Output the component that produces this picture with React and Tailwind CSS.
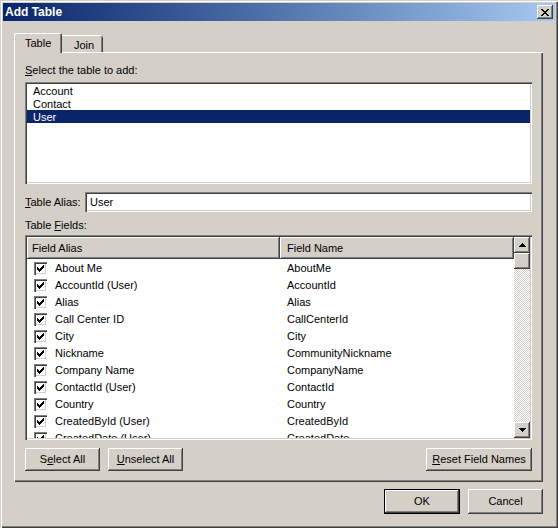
import React from 'react';

const raised =
  'shadow-[inset_-1px_-1px_0_#404040,inset_1px_1px_0_#fff,inset_-2px_-2px_0_#808080]';
const sunken =
  'shadow-[inset_1px_1px_0_#808080,inset_2px_2px_0_#404040,inset_-1px_-1px_0_#fff,inset_-2px_-2px_0_#d4d0c8]';

const fields = [
  ['About Me', 'AboutMe'],
  ['AccountId (User)', 'AccountId'],
  ['Alias', 'Alias'],
  ['Call Center ID', 'CallCenterId'],
  ['City', 'City'],
  ['Nickname', 'CommunityNickname'],
  ['Company Name', 'CompanyName'],
  ['ContactId (User)', 'ContactId'],
  ['Country', 'Country'],
  ['CreatedById (User)', 'CreatedById'],
  ['CreatedDate (User)', 'CreatedDate'],
];

const Check = () => (
  <div className={`w-[13px] h-[13px] bg-white shrink-0 flex items-center justify-center ${sunken}`}>
    <svg width="7" height="7" viewBox="0 0 7 7" shapeRendering="crispEdges">
      <path d="M0 2h1v3h-1zM1 3h1v3h-1zM2 4h1v3h-1zM3 3h1v3h-1zM4 2h1v3h-1zM5 1h1v3h-1zM6 0h1v3h-1z" fill="#000" />
    </svg>
  </div>
);

const Button = ({ children, className = '' }) => (
  <div className={`h-[23px] flex items-center justify-center bg-[#d4d0c8] ${raised} ${className}`}>
    {children}
  </div>
);

const Arrow = ({ down }) => (
  <div className={`h-[16px] w-[16px] bg-[#d4d0c8] flex items-center justify-center ${raised}`}>
    <svg width="7" height="4" viewBox="0 0 7 4" shapeRendering="crispEdges">
      <path d={down ? 'M0 0h7L3.5 4z' : 'M0 4h7L3.5 0z'} fill="#000" />
    </svg>
  </div>
);

export default function App() {
  return (
    <div className="w-[558px] h-[528px] bg-[#d4d0c8] p-[3px] flex flex-col text-[11px] leading-[13px] text-black font-['Liberation_Sans',Arial,sans-serif] shadow-[inset_1px_1px_0_#d4d0c8,inset_2px_2px_0_#fff,inset_-1px_-1px_0_#404040,inset_-2px_-2px_0_#808080]">
      {/* title bar */}
      <div className="h-[18px] flex items-center justify-between pl-[2px] pr-[2px] bg-gradient-to-r from-[#0a246a] to-[#a6caf0]">
        <span className="text-white font-bold text-[12px]">Add Table</span>
        <div className={`w-[16px] h-[14px] bg-[#d4d0c8] flex items-center justify-center ${raised}`}>
          <svg width="8" height="7" viewBox="0 0 8 7" shapeRendering="crispEdges">
            <path d="M0 0h2l2 2.5L6 0h2L5 3.5 8 7H6L4 4.5 2 7H0l3-3.5z" fill="#000" />
          </svg>
        </div>
      </div>

      <div className="flex-1 flex flex-col pl-[11px] pr-[12px] pt-[12px]">
        {/* tabs */}
        <div className="flex items-end h-[19px] relative z-10">
          <div className="w-[48px] h-[20px] -mb-[1px] bg-[#d4d0c8] rounded-t-[2px] flex items-start pt-[4px] pl-[11px] shadow-[inset_1px_1px_0_#fff,inset_-1px_0_0_#404040,inset_-2px_0_0_#808080]">
            Table
          </div>
          <div className="w-[41px] h-[17px] bg-[#d4d0c8] rounded-tr-[2px] flex items-start pt-[4px] pl-[12px] shadow-[inset_0_1px_0_#fff,inset_-1px_0_0_#404040,inset_-2px_0_0_#808080]">
            Join
          </div>
        </div>

        {/* panel */}
        <div className="w-[529px] h-[430px] flex flex-col px-[11px] shadow-[inset_1px_1px_0_#fff,inset_-1px_-1px_0_#404040,inset_-2px_-2px_0_#808080]">
          <div className="mt-[12px] h-[13px]">
            <u>S</u>elect the table to add:
          </div>
          <div className={`mt-[5px] h-[102px] bg-white p-[2px] ${sunken}`}>
            <div className="h-[13px] leading-[15px] pl-[6px]">Account</div>
            <div className="h-[13px] leading-[15px] pl-[6px]">Contact</div>
            <div className="h-[13px] leading-[15px] pl-[6px] bg-[#0a246a] text-white">User</div>
          </div>
          <div className="mt-[8px] h-[20px] flex items-center">
            <span className="w-[60px] pt-[1px]">
              <u>T</u>able Alias:
            </span>
            <div className={`flex-1 h-[20px] bg-white flex items-center pl-[5px] pt-[1px] ${sunken}`}>User</div>
          </div>
          <div className="mt-[6px] h-[13px] leading-[15px]">
            Table <u>F</u>ields:
          </div>
          <div className={`mt-[4px] h-[205px] bg-white p-[2px] flex ${sunken}`}>
            <div className="flex-1 flex flex-col overflow-hidden">
              <div className="h-[22px] shrink-0 flex">
                <div className={`w-[253px] bg-[#d4d0c8] flex items-center pl-[5px] pt-[1px] ${raised}`}>Field Alias</div>
                <div className={`flex-1 bg-[#d4d0c8] flex items-center pl-[7px] pt-[1px] ${raised}`}>Field Name</div>
              </div>
              {fields.map(([alias, name]) => (
                <div key={name} className="h-[17px] shrink-0 flex items-center pt-[2px]">
                  <div className="w-[253px] flex items-center pl-[7px] gap-[8px]">
                    <Check />
                    <span>{alias}</span>
                  </div>
                  <div className="flex-1 pl-[7px]">{name}</div>
                </div>
              ))}
            </div>
            <div className="w-[16px] flex flex-col">
              <Arrow />
              <div className={`h-[16px] bg-[#d4d0c8] ${raised}`} />
              <div className="flex-1 bg-[repeating-conic-gradient(#d4d0c8_0_25%,#fff_0_50%)] bg-[length:2px_2px]" />
              <Arrow down />
            </div>
          </div>
          <div className="mt-[8px] flex items-center">
            <Button className="w-[75px]">
              S<u>e</u>lect All
            </Button>
            <Button className="w-[75px] ml-[8px]">
              <u>U</u>nselect All
            </Button>
            <Button className="w-[106px] ml-auto">
              <u>R</u>eset Field Names
            </Button>
          </div>
        </div>

        {/* dialog buttons */}
        <div className="mt-[7px] flex justify-end gap-[8px]">
          <div className={`w-[76px] h-[25px] flex items-center justify-center border border-black bg-[#d4d0c8] ${raised}`}>
            OK
          </div>
          <div className={`w-[75px] h-[25px] flex items-center justify-center bg-[#d4d0c8] ${raised}`}>Cancel</div>
        </div>
      </div>
    </div>
  );
}
